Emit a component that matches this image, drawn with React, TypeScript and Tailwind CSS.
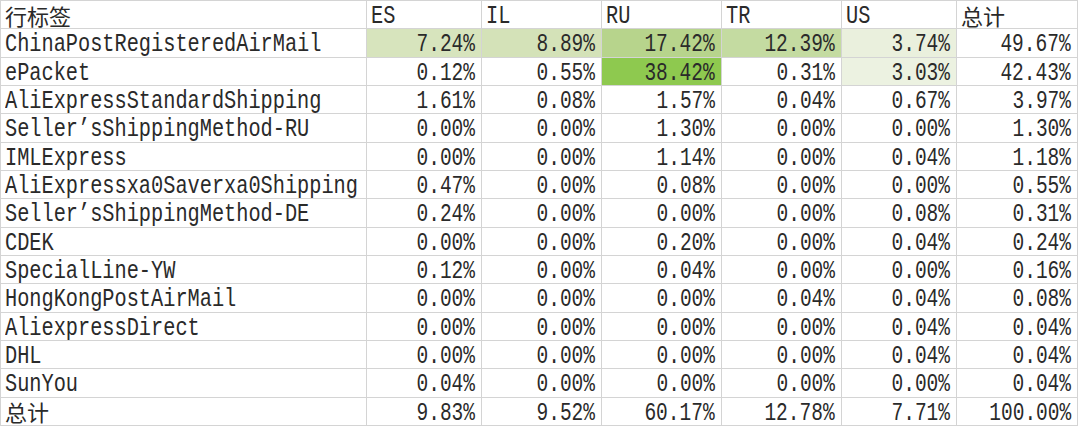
import React from "react";

const headers = ["ES", "IL", "RU", "TR", "US", "总计"];

const rows: [string, string[]][] = [
  ["ChinaPostRegisteredAirMail", ["7.24%", "8.89%", "17.42%", "12.39%", "3.74%", "49.67%"]],
  ["ePacket", ["0.12%", "0.55%", "38.42%", "0.31%", "3.03%", "42.43%"]],
  ["AliExpressStandardShipping", ["1.61%", "0.08%", "1.57%", "0.04%", "0.67%", "3.97%"]],
  ["Seller’sShippingMethod-RU", ["0.00%", "0.00%", "1.30%", "0.00%", "0.00%", "1.30%"]],
  ["IMLExpress", ["0.00%", "0.00%", "1.14%", "0.00%", "0.04%", "1.18%"]],
  ["AliExpressxa0Saverxa0Shipping", ["0.47%", "0.00%", "0.08%", "0.00%", "0.00%", "0.55%"]],
  ["Seller’sShippingMethod-DE", ["0.24%", "0.00%", "0.00%", "0.00%", "0.08%", "0.31%"]],
  ["CDEK", ["0.00%", "0.00%", "0.20%", "0.00%", "0.04%", "0.24%"]],
  ["SpecialLine-YW", ["0.12%", "0.00%", "0.04%", "0.00%", "0.00%", "0.16%"]],
  ["HongKongPostAirMail", ["0.00%", "0.00%", "0.00%", "0.04%", "0.04%", "0.08%"]],
  ["AliexpressDirect", ["0.00%", "0.00%", "0.00%", "0.00%", "0.04%", "0.04%"]],
  ["DHL", ["0.00%", "0.00%", "0.00%", "0.00%", "0.04%", "0.04%"]],
  ["SunYou", ["0.04%", "0.00%", "0.00%", "0.00%", "0.00%", "0.04%"]],
  ["总计", ["9.83%", "9.52%", "60.17%", "12.78%", "7.71%", "100.00%"]],
];

// colour scale cells, keyed "row-col"
const fills: Record<string, string> = {
  "0-0": "bg-[#d7e4bd]",
  "0-1": "bg-[#d4e2b8]",
  "0-2": "bg-[#b7d48c]",
  "0-3": "bg-[#c4dba1]",
  "0-4": "bg-[#eaf0dd]",
  "1-2": "bg-[#8ec94f]",
  "1-4": "bg-[#ecf2e1]",
};

const cell = "border-r border-b border-[#d4d4d4] flex items-center whitespace-nowrap";
const mono = { fontFamily: '"Liberation Mono", monospace' };
const cjk = { fontFamily: '"Noto Sans CJK SC", sans-serif' };

// tall narrow latin glyphs, like the sheet's SimSun
function Latin({ text, right }: { text: string; right?: boolean }) {
  return (
    <span
      className={`inline-block pt-[2.5px] text-[26px] leading-[22px] ${right ? "origin-right scale-x-[0.75]" : "origin-left scale-x-[0.78]"}`}
      style={mono}
    >
      {text}
    </span>
  );
}

function Cjk({ text }: { text: string }) {
  return (
    <span className="inline-block text-[22px] leading-[24px]" style={cjk}>
      {text}
    </span>
  );
}

const isCjk = (s: string) => /[\u4e00-\u9fff]/.test(s);

export default function App() {
  return (
    <div className="w-[1080px] h-[427px] bg-white overflow-hidden text-[#2a2a2a]">
      <div className="grid grid-cols-[366px_115px_120px_120px_120px_115px_121px] auto-rows-[28.35px] border-l border-t border-[#d4d4d4] w-fit">
        <div className={`${cell} pl-[4px]`}>
          <Cjk text="行标签" />
        </div>
        {headers.map((h) => (
          <div key={h} className={`${cell} pl-[4px]`}>
            {isCjk(h) ? <Cjk text={h} /> : <Latin text={h} />}
          </div>
        ))}
        {rows.map(([label, vals], r) => (
          <React.Fragment key={label}>
            <div className={`${cell} pl-[4px]`}>
              {isCjk(label) ? <Cjk text={label} /> : <Latin text={label} />}
            </div>
            {vals.map((v, c) => (
              <div
                key={c}
                className={`${cell} justify-end pr-[6px] ${fills[`${r}-${c}`] ?? ""}`}
              >
                <Latin text={v} right />
              </div>
            ))}
          </React.Fragment>
        ))}
      </div>
    </div>
  );
}
